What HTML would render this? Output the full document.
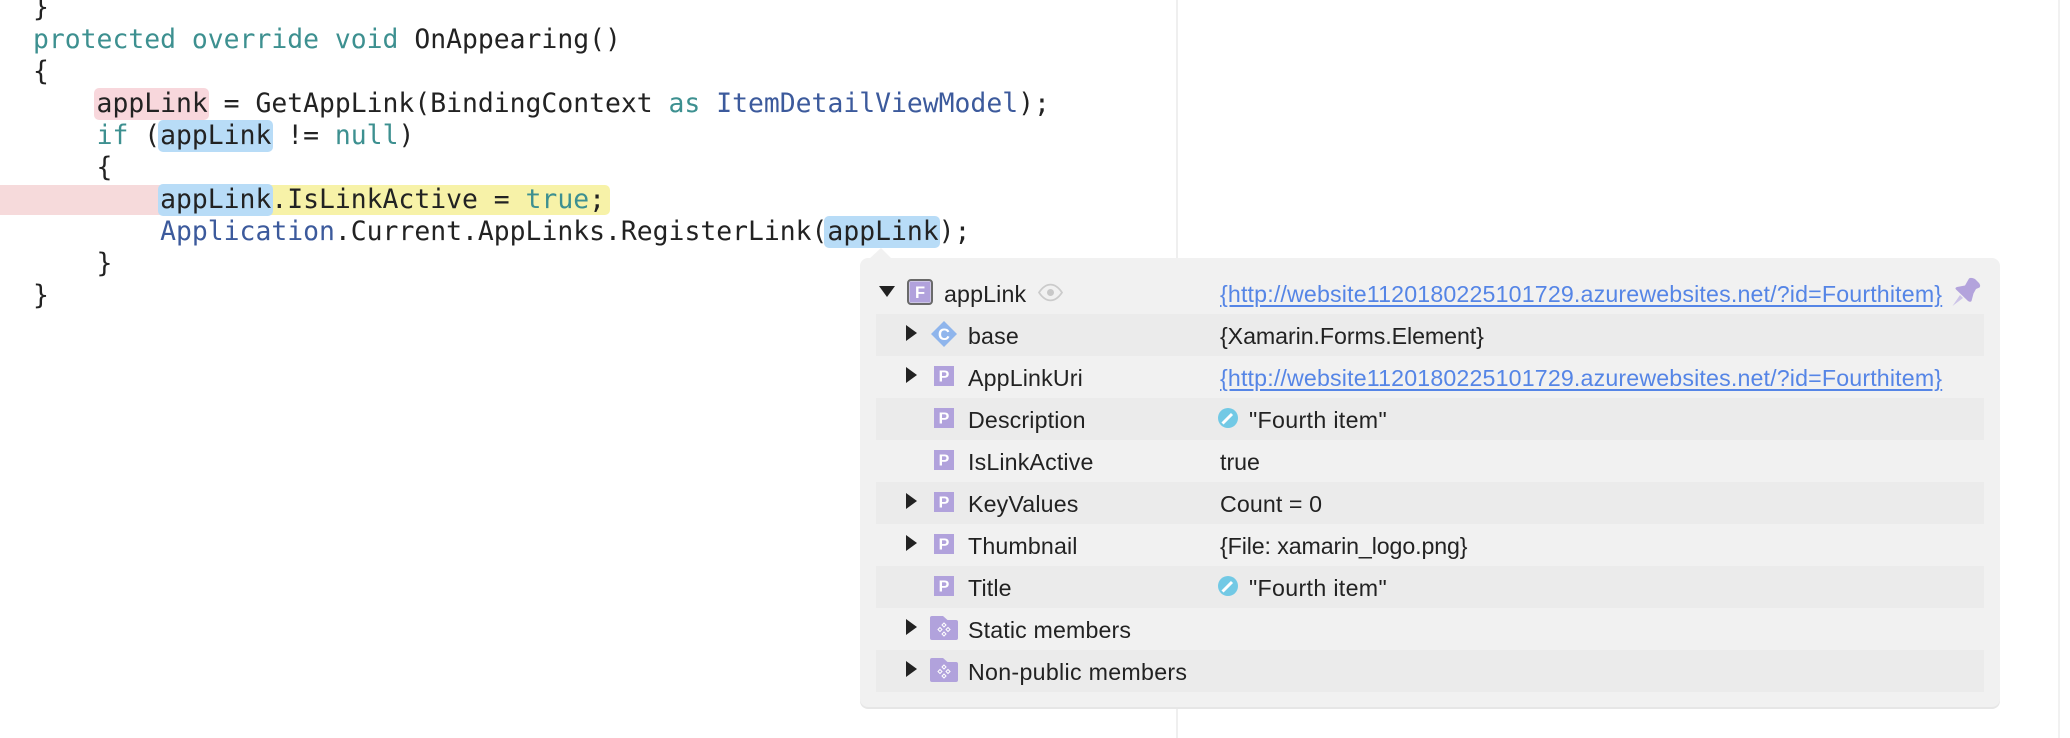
<!DOCTYPE html>
<html>
<head>
<meta charset="utf-8">
<style>
html,body{margin:0;padding:0;background:#fff;}
body{width:2070px;height:738px;position:relative;overflow:hidden;}
.abs{position:absolute;}
.c{position:absolute;left:33px;height:32px;line-height:32px;white-space:pre;font-family:"DejaVu Sans Mono","Liberation Mono",monospace;font-size:26.4px;color:#222;}
.k{color:#3d9090;}
.t{color:#3c5a9c;}
.stripe{position:absolute;left:876px;width:1108px;height:42px;background:#ebebeb;}
.l,.v{position:absolute;height:42px;line-height:42px;white-space:pre;font-family:"Liberation Sans",sans-serif;font-size:23.2px;color:#222;}
.l{left:968px;letter-spacing:.15px;}
.v{left:1220px;}
.u{color:#5585e6;letter-spacing:.16px;text-decoration:underline;text-decoration-thickness:1.5px;text-underline-offset:3px;}
svg{position:absolute;overflow:visible;}
</style>
</head>
<body>
<div class="abs" style="left:1176px;top:0;width:2px;height:738px;background:#efefef;"></div>
<div class="abs" style="left:2058px;top:0;width:2px;height:738px;background:#f1f1f1;"></div>

<div class="abs" style="left:94px;top:88px;width:115px;height:32px;background:#f8d7dc;border-radius:5px;"></div>
<div class="abs" style="left:158px;top:120px;width:115px;height:32px;background:#b8dcf7;border-radius:5px;"></div>
<div class="abs" style="left:0;top:185px;width:160px;height:30px;background:#f6dadb;"></div>
<div class="abs" style="left:270px;top:185px;width:340px;height:30px;background:#f7f2a8;border-radius:0 5px 5px 0;"></div>
<div class="abs" style="left:158px;top:184px;width:115px;height:32px;background:#b8dcf7;border-radius:5px;"></div>
<div class="abs" style="left:824px;top:216px;width:116px;height:32px;background:#b8dcf7;border-radius:5px;"></div>

<div class="c" style="top:-8px;">}</div>
<div class="c" style="top:24px;"><span class="k">protected override void</span> OnAppearing()</div>
<div class="c" style="top:56px;">{</div>
<div class="c" style="top:88px;">    appLink = GetAppLink(BindingContext <span class="k">as</span> <span class="t">ItemDetailViewModel</span>);</div>
<div class="c" style="top:120px;">    <span class="k">if</span> (appLink != <span class="k">null</span>)</div>
<div class="c" style="top:152px;">    {</div>
<div class="c" style="top:184px;">        appLink.IsLinkActive = <span class="k">true</span>;</div>
<div class="c" style="top:216px;">        <span class="t">Application</span>.Current.AppLinks.RegisterLink(appLink);</div>
<div class="c" style="top:248px;">    }</div>
<div class="c" style="top:280px;">}</div>

<!-- popover -->
<svg style="left:0;top:0;" width="2070" height="738"><path d="M869 259L881 248L892 259Z" fill="#f1f1f1"/></svg>
<div class="abs" style="left:860px;top:258px;width:1140px;height:449px;background:#f1f1f1;border-radius:8px;box-shadow:0 2px 0 #e6e6e6;"></div>
<div class="stripe" style="top:314px;"></div>
<div class="stripe" style="top:398px;"></div>
<div class="stripe" style="top:482px;"></div>
<div class="stripe" style="top:566px;"></div>
<div class="stripe" style="top:650px;"></div>

<!-- labels -->
<div class="l" style="left:944px;top:273px;">appLink</div>
<div class="l" style="top:315px;">base</div>
<div class="l" style="top:357px;">AppLinkUri</div>
<div class="l" style="top:399px;">Description</div>
<div class="l" style="top:441px;">IsLinkActive</div>
<div class="l" style="top:483px;">KeyValues</div>
<div class="l" style="top:525px;">Thumbnail</div>
<div class="l" style="top:567px;">Title</div>
<div class="l" style="top:609px;">Static members</div>
<div class="l" style="top:651px;letter-spacing:.3px;">Non-public members</div>

<!-- values -->
<div class="v u" style="top:273px;">{http://website1120180225101729.azurewebsites.net/?id=Fourthitem}</div>
<div class="v" style="top:315px;letter-spacing:-.07px;">{Xamarin.Forms.Element}</div>
<div class="v u" style="top:357px;">{http://website1120180225101729.azurewebsites.net/?id=Fourthitem}</div>
<div class="v" style="left:1249px;top:399px;letter-spacing:.33px;">"Fourth item"</div>
<div class="v" style="top:441px;">true</div>
<div class="v" style="top:483px;letter-spacing:.1px;">Count = 0</div>
<div class="v" style="top:525px;letter-spacing:-.11px;">{File: xamarin_logo.png}</div>
<div class="v" style="left:1249px;top:567px;letter-spacing:.33px;">"Fourth item"</div>

<!-- icons -->
<svg style="left:0;top:0;pointer-events:none;" width="2070" height="738">
  <!-- expander arrows -->
  <path d="M879 286H895L887 297Z" fill="#222"/>
  <path d="M906 325L917 333L906 341Z" fill="#222"/>
  <path d="M906 367L917 375L906 383Z" fill="#222"/>
  <path d="M906 493L917 501L906 509Z" fill="#222"/>
  <path d="M906 535L917 543L906 551Z" fill="#222"/>
  <path d="M906 619L917 627L906 635Z" fill="#222"/>
  <path d="M906 661L917 669L906 677Z" fill="#222"/>

  <!-- F icon -->
  <rect x="908" y="280" width="24" height="24" rx="3" fill="#e8e8ee" stroke="#6a6a6a" stroke-width="2"/>
  <rect x="909.500" y="281.500" width="21" height="21" fill="#b1a2dc"/>
  <text x="920" y="298" text-anchor="middle" font-family="Liberation Sans" font-weight="700" font-size="16.500" fill="#fff">F</text>

  <!-- eye -->
  <path d="M1039 292.500C1046 282 1055 282 1062 292.500C1055 303 1046 303 1039 292.500Z" fill="none" stroke="#cbcbcb" stroke-width="1.700"/>
  <circle cx="1050.500" cy="292.500" r="3.500" fill="#c8c8c8"/>

  <!-- pin -->
  <path d="M1969 278.500Q1971 277 1975 279L1979 283Q1981 285.500 1979.500 287.500L1976 289L1973.500 293.500L1971.500 301Q1970.500 302.500 1968 301L1956 289.500Q1954.500 288 1957 287L1965 285.500Z" fill="#b3a3dc"/>
  <path d="M1952.500 306L1960 295L1963 298Z" fill="#cdc4e8"/>

  <!-- C diamond -->
  <path d="M944 321L957 334L944 347L931 334Z" fill="#8fb5ec"/>
  <text x="944" y="340" text-anchor="middle" font-family="Liberation Sans" font-weight="700" font-size="16.500" fill="#fff">C</text>

  <!-- P icons -->
  <g font-family="Liberation Sans" font-weight="700" font-size="16" fill="#fff" text-anchor="middle">
    <rect x="934" y="366" width="20" height="20" fill="#b1a2dc"/><text x="944" y="381.500">P</text>
    <rect x="934" y="408" width="20" height="20" fill="#b1a2dc"/><text x="944" y="423.500">P</text>
    <rect x="934" y="450" width="20" height="20" fill="#b1a2dc"/><text x="944" y="465.500">P</text>
    <rect x="934" y="492" width="20" height="20" fill="#b1a2dc"/><text x="944" y="507.500">P</text>
    <rect x="934" y="534" width="20" height="20" fill="#b1a2dc"/><text x="944" y="549.500">P</text>
    <rect x="934" y="576" width="20" height="20" fill="#b1a2dc"/><text x="944" y="591.500">P</text>
  </g>

  <!-- folders -->
  <g>
    <path d="M932 616H943L947.500 620H956Q958 620 958 622V638Q958 640 956 640H932Q930 640 930 638V618Q930 616 932 616Z" fill="#b1a2dc"/>
    <g fill="none" stroke="#fff" stroke-width="1">
      <path d="M944 623L946 625L944 627L942 625Z"/>
      <path d="M940 627.500L942 629.500L940 631.500L938 629.500Z"/>
      <path d="M948 627.500L950 629.500L948 631.500L946 629.500Z"/>
      <path d="M944 632L946 634L944 636L942 634Z"/>
    </g>
  </g>
  <g transform="translate(0,42)">
    <path d="M932 616H943L947.500 620H956Q958 620 958 622V638Q958 640 956 640H932Q930 640 930 638V618Q930 616 932 616Z" fill="#b1a2dc"/>
    <g fill="none" stroke="#fff" stroke-width="1">
      <path d="M944 623L946 625L944 627L942 625Z"/>
      <path d="M940 627.500L942 629.500L940 631.500L938 629.500Z"/>
      <path d="M948 627.500L950 629.500L948 631.500L946 629.500Z"/>
      <path d="M944 632L946 634L944 636L942 634Z"/>
    </g>
  </g>

  <!-- pencil badges -->
  <circle cx="1228" cy="418" r="10" fill="#72c9e5"/>
  <path d="M1222.500 423.500L1232 414" stroke="#fff" stroke-width="3" fill="none"/>
  <circle cx="1228" cy="586" r="10" fill="#72c9e5"/>
  <path d="M1222.500 591.500L1232 582" stroke="#fff" stroke-width="3" fill="none"/>
</svg>
</body>
</html>
